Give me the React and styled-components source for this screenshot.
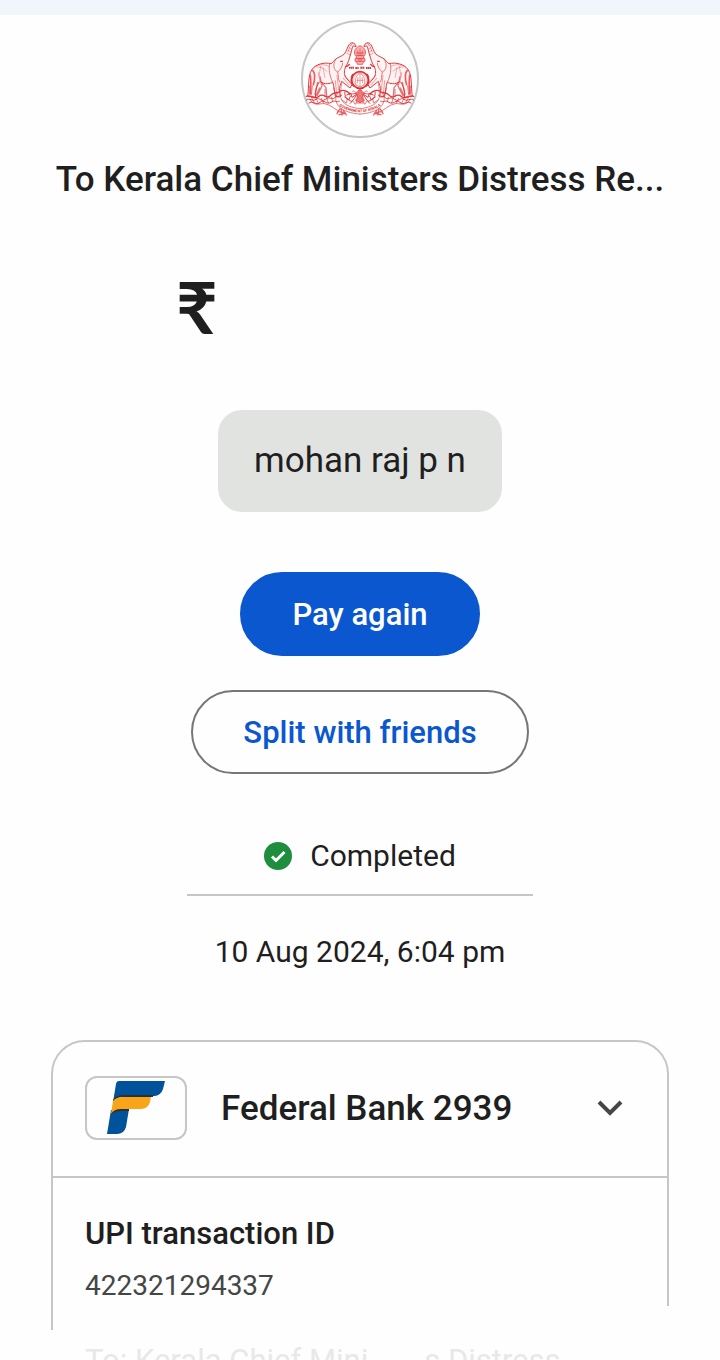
import React from 'react'
import styled, {createGlobalStyle} from 'styled-components'

const Elephant = () => (
  <g fill="none" stroke="#e2383b" strokeWidth="3" strokeLinecap="round">
    <path
      fill="#fff3f3"
      strokeWidth="3"
      d="M183 137C181 125 168 123 162 132C156 142 155 151 148 160C141 166 130 170 122 175C116 180 114 186 108 189C88 184 62 190 50 208C38 228 43 252 38 287L62 290C60 270 66 250 75 243C90 252 106 250 113 244C119 258 116 275 122 288L136 286C130 262 137 252 140 242L165 262L171 252L152 230C146 220 148 208 152 198C160 188 163 172 167 160C171 150 170 139 175 136Z"
    />
    <path d="M122 176C112 192 116 208 128 214C136 208 142 198 143 188" strokeWidth="2" />
    <path d="M128 214C132 228 128 234 134 244M104 190C100 206 104 224 112 243" strokeWidth="2" />
    <path d="M172 129C164 133 162 144 159 153M168 132l5 5M163 141l6 4M160 150l7 3M156 158l9 5" strokeWidth="2" opacity=".7" />
    <path d="M137 182l5 0M152 198c5 0 8-3 11-7" strokeWidth="4" />
    <path d="M53 210C61 216 60 238 55 252M46 224C48 240 48 258 46 280" strokeWidth="5" opacity=".8" />
    <path d="M58 198C76 190 90 191 102 197M66 199C80 198 88 204 96 212M77 198l-5 28M84 202l6 28M70 216l5 28" strokeWidth="2" opacity=".6" />
    <path d="M75 228l6 28l-14 28M80 245l13 16l2 25M74 262l-12 25M68 245l-8 36" strokeWidth="4" opacity=".7" />
    <path d="M126 224l5 45M121 240l4 40M145 233l17 20M150 224l14 19M140 246l-3 32" strokeWidth="2" opacity=".7" />
    <path d="M44 256v24M52 256l-3 26M116 262l7 24M90 266v18" strokeWidth="2" />
    {/* scrollwork under the feet */}
    <path d="M34 287C50 280 58 301 72 287S94 300 106 285S128 282 138 270C148 267 160 272 165 282" strokeWidth="4" />
    <path d="M34 298c10-8 18 6 29-2s15 10 28 0s20 3 28-5s12 5 20-7M42 307c12-9 22 9 33-2s20 9 33 0s15 2 25-3" strokeWidth="3" />
    <path d="M50 291l7 13m7-9l7 14m8-16l7 15m9-15l5 13m10-16l3 14M45 299c18 20 28 8 44 10s30 16 38 20" strokeWidth="3" opacity=".7" />
    <path d="M128 278C117 290 122 311 138 323S181 340 195 340M138 280C132 296 148 313 170 319S190 323 195 323" strokeWidth="2" />
    <path d="M134 325l-8 14M138 324l3 19M145 329l9 14M128 332l18 4M132 342l20-4" strokeWidth="4" opacity=".8" />
    <path d="M150 273c-4 14 8 25 20 29M158 273c7 8 15 8 24 5M155 283l12-5l4 12l12-8M149 289l12 9l5-11M169 304c5-4 10-12 14-20" strokeWidth="3" />
    <path d="M141 298l13 9l3-12M165 309l8-9l8 11l7-13" strokeWidth="3" opacity=".7" />
  </g>
)

const Emblem = () => (
  <svg viewBox="24 64 342 342" width="114" height="114" role="img" aria-label="Government of Kerala">
    <Elephant />
    <g transform="translate(390 0) scale(-1 1)">
      <Elephant />
    </g>
    {/* lion capital */}
    <g fill="#f7b4b5" stroke="#e23437" strokeWidth="2">
      <path d="M181 165C175 155 179 145 187 140C190 134 200 134 203 140C211 145 215 155 209 165Z" />
      <path d="M186 149l4 13M195 144v20M204 149l-4 13M181 157h28M185 165h20l2 8h-24zM180 174h30v8h-30zM184 182l3 9h16l3-9" />
      <circle cx="195" cy="178" r="4" />
      <path d="M162 201h15M181 202h10M196 201h13M213 202h15" strokeWidth="6" strokeDasharray="5 1" />
    </g>
    {/* conch inside the wreath */}
    <g fill="none" stroke="#e12f32">
      <circle cx="195" cy="238" r="25" strokeWidth="5" fill="#fff" />
      <circle cx="195" cy="238" r="19" strokeWidth="1" />
      <path d="M182 252C179 234 185 223 195 217C205 223 211 234 208 252L199 258h-8ZM187 248l2-19M195 220v36M203 248l-2-19M184 239h22" strokeWidth="2" opacity=".7" />
      <path d="M173 220C167 232 167 247 176 257M217 220C223 232 223 247 214 257" strokeWidth="4" />
    </g>
    <g fill="#ed7779" stroke="#df2e31" strokeWidth="2">
      <path d="M195 264l11 14l-5 12l8 9l-14 7l-14-7l8-9l-5-12z" />
      <path d="M172 272c9-4 16 8 14 22M218 272c-9-4-16 8-14 22M184 307h22" fill="none" />
    </g>
    <path id="motto" d="M112 300Q195 370 278 300" fill="none" />
    <EmblemText textAnchor="middle">
      <textPath href="#motto" startOffset="50%">GOVERNMENT OF KERALA</textPath>
    </EmblemText>
  </svg>
)

const CheckIcon = () => (
  <svg width="28" height="28" viewBox="0 0 28 28" aria-hidden="true">
    <circle cx="14" cy="14" r="14" fill="#1e8e3e" />
    <path d="M8 14.500L12 18.500L20.500 10" fill="none" stroke="#fff" strokeWidth="3" />
  </svg>
)

const ChevronIcon = () => (
  <svg width="26" height="16" viewBox="0 0 26 16" aria-hidden="true">
    <path d="M2 2L13 13L24 2" fill="none" stroke="#444746" strokeWidth="4" />
  </svg>
)

const FederalLogo = () => (
  <svg width="58" height="54" viewBox="0 0 58 54" role="img" aria-label="Federal Bank">
    <path fill="#00539b" d="M12 0H58L56 8Q54 14 48 15H17Q9 15 6 21L9 3Q9.500 0 12 0Z" />
    <path fill="#2b3038" d="M6 19Q9 14 17 14H46V16H17Q9 16 6 21Z" />
    <path fill="#00539b" d="M4 29L0 53H10Q17 53 19 46L22 28Z" />
    <path fill="#2b3038" d="M4 31Q7 27 15 27H22V30H14Q7 30 4 34Z" />
    <path fill="#f9a51a" d="M6 20Q9 16 17 16H44L43 21Q41 28 34 28H14Q7 28 4 33Z" />
  </svg>
)

export default function App() {
  return (
    <Page>
      <GlobalStyle />
      <StatusStrip />
      <Main>
        <Avatar>
          <Emblem />
        </Avatar>
        <Title>To Kerala Chief Ministers Distress Re...</Title>
        <Amount>₹</Amount>
        <Note>mohan raj p n</Note>
        <Actions>
          <Button type="button" $primary>
            Pay again
          </Button>
          <Button type="button">Split with friends</Button>
        </Actions>
        <Status>
          <CheckIcon />
          Completed
        </Status>
        <DateText>10 Aug 2024, 6:04 pm</DateText>
        <Card>
          <BankHeader type="button" aria-expanded="true">
            <LogoBox>
              <FederalLogo />
            </LogoBox>
            <BankName>Federal Bank 2939</BankName>
            <ChevronIcon />
          </BankHeader>
          <Details>
            <Label>UPI transaction ID</Label>
            <Value>422321294337</Value>
            <Payee>
              <span>To: Kerala Chief Mini</span>
              <span>s Distress</span>
            </Payee>
          </Details>
        </Card>
      </Main>
    </Page>
  )
}

const GlobalStyle = createGlobalStyle`
  * {
    box-sizing: border-box;
  }
  body {
    margin: 0;
    background: #fefefe;
    color: #1f1f1f;
    font-family: Roboto, "Liberation Sans", sans-serif;
  }
  button {
    font-family: inherit;
    cursor: pointer;
  }
`

const Page = styled.div`
  height: 100vh;
  overflow: hidden;
`

const StatusStrip = styled.div`
  height: 15px;
  background: #f1f5fc;
`

const Main = styled.main`
  display: flex;
  flex-direction: column;
  align-items: center;
  padding: 5px 51px 0;
`

const Avatar = styled.div`
  display: flex;
  width: 118px;
  height: 118px;
  border: 2px solid #c4c7c5;
  border-radius: 50%;
`

const EmblemText = styled.text`
  fill: #d9292c;
  font-size: 11px;
  font-weight: 700;
`

const Title = styled.h1`
  margin: 22px 0 0;
  font-size: 35px;
  font-weight: 500;
  line-height: 40px;
  white-space: nowrap;
`

const Amount = styled.div`
  width: 368px;
  margin-top: 64px;
  font-family: Lato, Roboto, sans-serif;
  font-size: 72px;
  font-weight: 700;
  line-height: 84px;
`

const Note = styled.div`
  margin-top: 62px;
  padding: 31px 36px;
  border-radius: 24px;
  background: #e1e3e1;
  font-size: 35px;
  line-height: 40px;
`

const Actions = styled.div`
  display: flex;
  flex-direction: column;
  align-items: center;
  gap: 34px;
  margin-top: 60px;
`

const Button = styled.button`
  height: 84px;
  padding: 0 50px;
  border: 2px solid ${props => (props.$primary ? '#0b57d0' : '#747775')};
  border-radius: 42px;
  background: ${props => (props.$primary ? '#0b57d0' : 'transparent')};
  color: ${props => (props.$primary ? '#fff' : '#0b57d0')};
  font-size: 31px;
  font-weight: 500;
`

const Status = styled.div`
  display: flex;
  align-items: center;
  justify-content: center;
  gap: 18px;
  width: 346px;
  margin-top: 62px;
  padding-bottom: 18px;
  border-bottom: 2px solid #c4c7c5;
  font-size: 30px;
  line-height: 40px;
`

const DateText = styled.p`
  margin: 36px 0 0;
  font-size: 30px;
  line-height: 40px;
`

const Card = styled.section`
  width: 100%;
  margin-top: 68px;
`

const BankHeader = styled.button`
  display: flex;
  align-items: center;
  width: 100%;
  height: 138px;
  padding: 0 44px 2px 32px;
  border: 2px solid #c4c7c5;
  border-radius: 34px 34px 0 0;
  background: transparent;
  color: inherit;
  text-align: left;
`

const LogoBox = styled.span`
  display: flex;
  align-items: center;
  justify-content: center;
  width: 102px;
  height: 64px;
  border: 2px solid #c4c7c5;
  border-radius: 12px;
`

const BankName = styled.span`
  flex: 1;
  margin-left: 34px;
  font-size: 35px;
  font-weight: 500;
`

/* the side rules stop before the end of the card */
const Details = styled.div`
  padding: 36px 34px 0;
  background: linear-gradient(#c4c7c5, #c4c7c5) left top / 2px 152px no-repeat,
    linear-gradient(#c4c7c5, #c4c7c5) right top / 2px 128px no-repeat;
`

const Label = styled.div`
  font-size: 31px;
  font-weight: 500;
  line-height: 40px;
`

const Value = styled.div`
  margin-top: 12px;
  color: #444746;
  font-size: 28px;
  line-height: 40px;
`

const Payee = styled.div`
  display: flex;
  gap: 56px;
  margin-top: 35px;
  color: #e8e8e8;
  font-size: 31px;
  line-height: 40px;
`
